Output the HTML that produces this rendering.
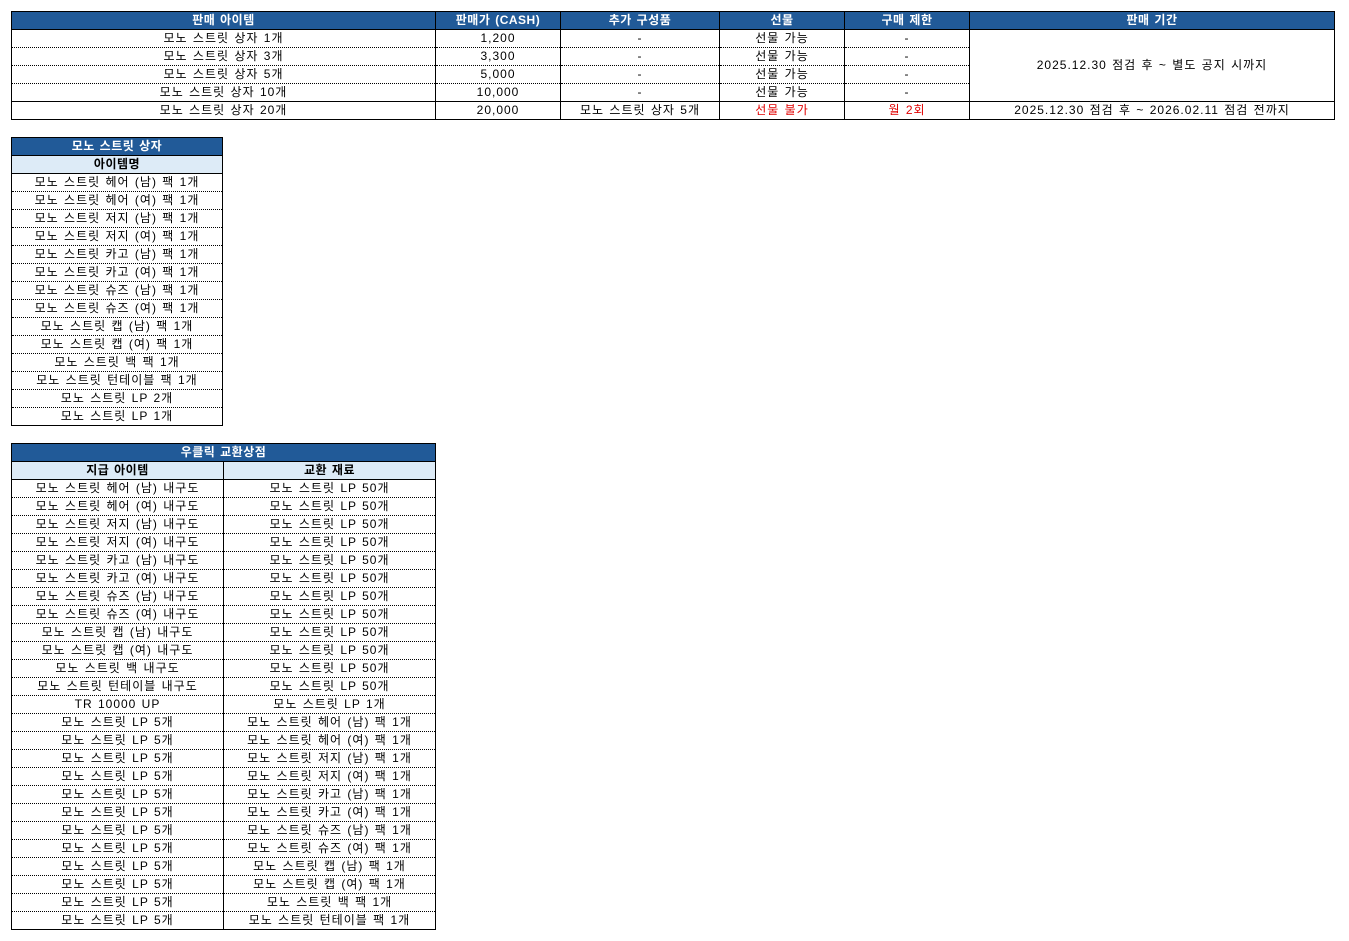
<!DOCTYPE html>
<html><head><meta charset="utf-8"><style>
body{margin:0;background:#fff;font-family:"Liberation Sans","Noto Sans CJK KR",sans-serif;font-size:12px;color:#000}
table{position:absolute;border-collapse:collapse;table-layout:fixed;left:11px}
td{height:17px;padding:0;text-align:center;line-height:15px;white-space:nowrap;overflow:hidden;letter-spacing:1px;word-spacing:1px;border-left:1px solid #000;border-right:1px solid #000;border-top:1px dotted #000;border-bottom:1px dotted #000}
tr.h td{background:#215a98;color:#fff;font-weight:bold;letter-spacing:0.5px;border:1px solid #000}
tr.s td{background:#ddebf7;font-weight:bold;letter-spacing:0.5px;border:1px solid #000}
tr:last-child td{border-bottom:1px solid #000}
.r{color:#e00000}
</style></head><body>
<table style="top:11px;width:1323px">
<colgroup><col style="width:424px"><col style="width:125px"><col style="width:159px"><col style="width:125px"><col style="width:125px"><col style="width:365px"></colgroup>
<tr class="h"><td>판매 아이템</td><td>판매가 (CASH)</td><td>추가 구성품</td><td>선물</td><td>구매 제한</td><td>판매 기간</td></tr>
<tr><td>모노 스트릿 상자 1개</td><td>1,200</td><td>-</td><td>선물 가능</td><td>-</td><td rowspan="4" style="border-bottom:1px solid #000">2025.12.30 점검 후 ~ 별도 공지 시까지</td></tr>
<tr><td>모노 스트릿 상자 3개</td><td>3,300</td><td>-</td><td>선물 가능</td><td>-</td></tr>
<tr><td>모노 스트릿 상자 5개</td><td>5,000</td><td>-</td><td>선물 가능</td><td>-</td></tr>
<tr><td style="border-bottom:1px solid #000">모노 스트릿 상자 10개</td><td style="border-bottom:1px solid #000">10,000</td><td style="border-bottom:1px solid #000">-</td><td style="border-bottom:1px solid #000">선물 가능</td><td style="border-bottom:1px solid #000">-</td></tr>
<tr><td>모노 스트릿 상자 20개</td><td>20,000</td><td>모노 스트릿 상자 5개</td><td class="r">선물 불가</td><td class="r">월 2회</td><td>2025.12.30 점검 후 ~ 2026.02.11 점검 전까지</td></tr>
</table>

<table style="top:137px;width:212px">
<tr class="h"><td>모노 스트릿 상자</td></tr>
<tr class="s"><td>아이템명</td></tr>
<tr><td>모노 스트릿 헤어 (남) 팩 1개</td></tr>
<tr><td>모노 스트릿 헤어 (여) 팩 1개</td></tr>
<tr><td>모노 스트릿 저지 (남) 팩 1개</td></tr>
<tr><td>모노 스트릿 저지 (여) 팩 1개</td></tr>
<tr><td>모노 스트릿 카고 (남) 팩 1개</td></tr>
<tr><td>모노 스트릿 카고 (여) 팩 1개</td></tr>
<tr><td>모노 스트릿 슈즈 (남) 팩 1개</td></tr>
<tr><td>모노 스트릿 슈즈 (여) 팩 1개</td></tr>
<tr><td>모노 스트릿 캡 (남) 팩 1개</td></tr>
<tr><td>모노 스트릿 캡 (여) 팩 1개</td></tr>
<tr><td>모노 스트릿 백 팩 1개</td></tr>
<tr><td>모노 스트릿 턴테이블 팩 1개</td></tr>
<tr><td>모노 스트릿 LP 2개</td></tr>
<tr><td>모노 스트릿 LP 1개</td></tr>
</table>

<table style="top:443px;width:424px">
<colgroup><col style="width:212px"><col style="width:212px"></colgroup>
<tr class="h"><td colspan="2">우클릭 교환상점</td></tr>
<tr class="s"><td>지급 아이템</td><td>교환 재료</td></tr>
<tr><td>모노 스트릿 헤어 (남) 내구도</td><td>모노 스트릿 LP 50개</td></tr>
<tr><td>모노 스트릿 헤어 (여) 내구도</td><td>모노 스트릿 LP 50개</td></tr>
<tr><td>모노 스트릿 저지 (남) 내구도</td><td>모노 스트릿 LP 50개</td></tr>
<tr><td>모노 스트릿 저지 (여) 내구도</td><td>모노 스트릿 LP 50개</td></tr>
<tr><td>모노 스트릿 카고 (남) 내구도</td><td>모노 스트릿 LP 50개</td></tr>
<tr><td>모노 스트릿 카고 (여) 내구도</td><td>모노 스트릿 LP 50개</td></tr>
<tr><td>모노 스트릿 슈즈 (남) 내구도</td><td>모노 스트릿 LP 50개</td></tr>
<tr><td>모노 스트릿 슈즈 (여) 내구도</td><td>모노 스트릿 LP 50개</td></tr>
<tr><td>모노 스트릿 캡 (남) 내구도</td><td>모노 스트릿 LP 50개</td></tr>
<tr><td>모노 스트릿 캡 (여) 내구도</td><td>모노 스트릿 LP 50개</td></tr>
<tr><td>모노 스트릿 백 내구도</td><td>모노 스트릿 LP 50개</td></tr>
<tr><td>모노 스트릿 턴테이블 내구도</td><td>모노 스트릿 LP 50개</td></tr>
<tr><td>TR 10000 UP</td><td>모노 스트릿 LP 1개</td></tr>
<tr><td>모노 스트릿 LP 5개</td><td>모노 스트릿 헤어 (남) 팩 1개</td></tr>
<tr><td>모노 스트릿 LP 5개</td><td>모노 스트릿 헤어 (여) 팩 1개</td></tr>
<tr><td>모노 스트릿 LP 5개</td><td>모노 스트릿 저지 (남) 팩 1개</td></tr>
<tr><td>모노 스트릿 LP 5개</td><td>모노 스트릿 저지 (여) 팩 1개</td></tr>
<tr><td>모노 스트릿 LP 5개</td><td>모노 스트릿 카고 (남) 팩 1개</td></tr>
<tr><td>모노 스트릿 LP 5개</td><td>모노 스트릿 카고 (여) 팩 1개</td></tr>
<tr><td>모노 스트릿 LP 5개</td><td>모노 스트릿 슈즈 (남) 팩 1개</td></tr>
<tr><td>모노 스트릿 LP 5개</td><td>모노 스트릿 슈즈 (여) 팩 1개</td></tr>
<tr><td>모노 스트릿 LP 5개</td><td>모노 스트릿 캡 (남) 팩 1개</td></tr>
<tr><td>모노 스트릿 LP 5개</td><td>모노 스트릿 캡 (여) 팩 1개</td></tr>
<tr><td>모노 스트릿 LP 5개</td><td>모노 스트릿 백 팩 1개</td></tr>
<tr><td>모노 스트릿 LP 5개</td><td>모노 스트릿 턴테이블 팩 1개</td></tr>
</table>
</body></html>
